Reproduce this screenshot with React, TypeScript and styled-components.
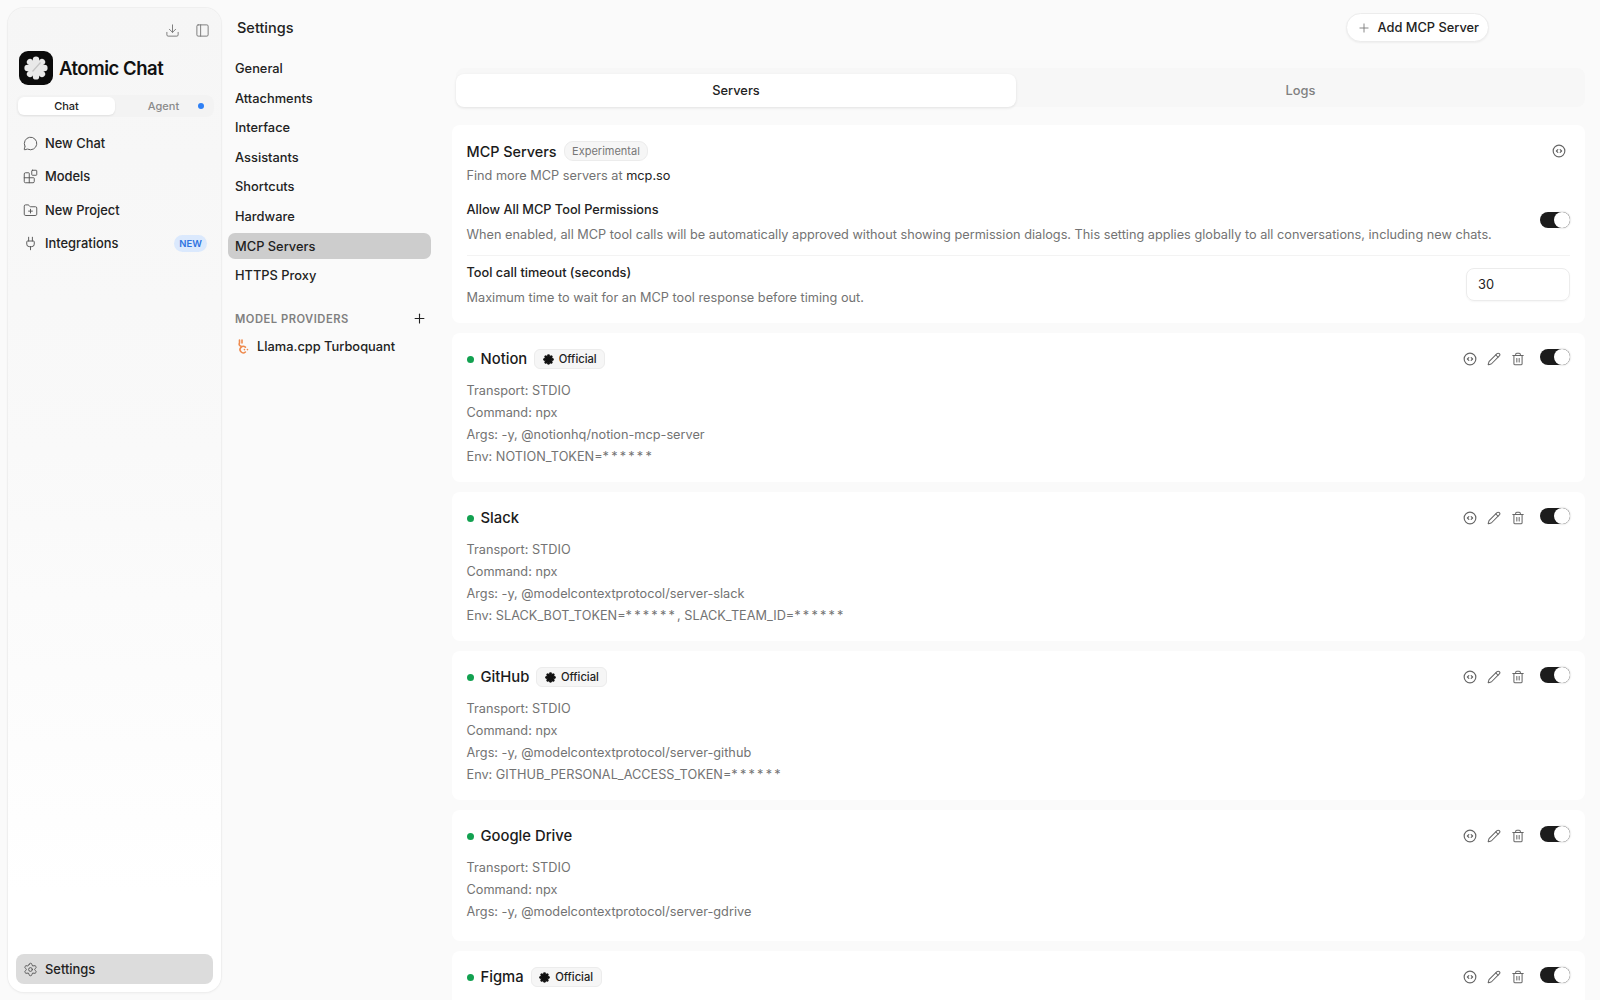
import React from "react";
import styled, { createGlobalStyle } from "styled-components";
import {
  Blocks,
  Download,
  FolderPlus,
  MessageCircle,
  PanelLeft,
  Pencil,
  Plug,
  Plus,
  Settings as SettingsIcon,
  Trash2,
} from "lucide-react";

const GlobalStyle = createGlobalStyle`
  html, body {
    margin: 0;
    height: 100%;
    overflow: hidden;
    background: #fafafa;
    color: #1b1b1b;
    font-family: Inter, "Liberation Sans", sans-serif;
    font-size: 12.85px;
  }
  * { box-sizing: border-box; }
`;

const Page = styled.div`
  display: flex;
  height: 100vh;
  padding: 8px 0 8px 8px;
  overflow: hidden;
`;

const Sidebar = styled.aside`
  width: 213px;
  flex: none;
  display: flex;
  flex-direction: column;
  padding: 0 8px 8px;
  border-radius: 16px;
  background: linear-gradient(#f6f6f6 0%, #f9f9f9 45%, #ffffff 90%);
  box-shadow: 0 0 0 1px #efefef, 0 1px 3px rgba(0, 0, 0, 0.06);
`;

const SideTools = styled.div`
  display: flex;
  justify-content: flex-end;
  align-items: center;
  gap: 15px;
  height: 42px;
  padding: 0 3px 0 0;
  margin-top: 1px;
  color: #777;
`;

const Brand = styled.div`
  display: flex;
  align-items: center;
  gap: 6px;
  height: 34px;
  margin-left: 3px;
`;

const LogoBox = styled.div`
  width: 34px;
  height: 34px;
  border-radius: 9px;
  background: #0b0b0b;
  display: flex;
  align-items: center;
  justify-content: center;
`;

const BrandName = styled.span`
  font-size: 18.5px;
  font-weight: 600;
  letter-spacing: -0.5px;
  color: #111;
`;

const ModeSwitch = styled.div`
  display: flex;
  align-items: center;
  height: 22px;
  margin: 10px -1px 0 0;
  padding: 2px;
  border-radius: 8px;
  background: #f3f3f3;
`;

const ModeTab = styled.div<{ $active?: boolean }>`
  position: relative;
  flex: 1;
  height: 18px;
  display: flex;
  align-items: center;
  justify-content: center;
  border-radius: 6px;
  font-size: 11px;
  font-weight: 500;
  color: ${(p) => (p.$active ? "#222" : "#8a8a8a")};
  background: ${(p) => (p.$active ? "#fff" : "transparent")};
  box-shadow: ${(p) => (p.$active ? "0 1px 2px rgba(0,0,0,.08)" : "none")};
`;

const BlueDot = styled.span`
  position: absolute;
  right: 8px;
  top: 6px;
  width: 6px;
  height: 6px;
  border-radius: 50%;
  background: #2f80f5;
`;

const SideNav = styled.nav`
  display: flex;
  flex-direction: column;
  margin-top: 10px;
  flex: 1;
`;

const SideItem = styled.div`
  display: flex;
  align-items: center;
  gap: 7px;
  height: 33.3px;
  padding-left: 7px;
  font-size: 12.9px;
  font-weight: 450;
  color: #222;
  svg {
    color: #555;
    flex: none;
  }
`;

const NewPill = styled.span`
  margin-left: auto;
  margin-right: 6px;
  width: 33px;
  height: 17px;
  border-radius: 9px;
  background: #dbe9fd;
  color: #2f74e0;
  font-size: 9.5px;
  font-weight: 600;
  display: flex;
  align-items: center;
  justify-content: center;
`;

const SettingsButton = styled(SideItem)`
  height: 30px;
  border-radius: 8px;
  background: #dcdcdc;
`;

const Main = styled.div`
  flex: 1;
  min-width: 0;
  display: flex;
  flex-direction: column;
`;

const Header = styled.header`
  display: flex;
  align-items: center;
  justify-content: space-between;
  flex: none;
  height: 39px;
  padding: 0 111px 0 16px;
`;

const HeaderTitle = styled.h1`
  margin: 0;
  font-size: 14.5px;
  font-weight: 500;
  color: #222;
`;

const AddButton = styled.button`
  display: flex;
  align-items: center;
  gap: 7px;
  height: 29px;
  padding: 0 9px 0 10px;
  border: 1px solid #ececec;
  border-radius: 15px;
  background: #fff;
  font: 500 12.8px Inter, "Liberation Sans", sans-serif;
  color: #222;
  box-shadow: 0 1px 2px rgba(0, 0, 0, 0.05);
  svg {
    color: #777;
  }
`;

const Body = styled.div`
  flex: 1;
  min-height: 0;
  display: flex;
`;

const SettingsNav = styled.nav`
  width: 231px;
  flex: none;
  padding: 8.5px 21px 0 7px;
  display: flex;
  flex-direction: column;
  gap: 3.6px;
`;

const NavLink = styled.div<{ $active?: boolean }>`
  height: 26px;
  display: flex;
  align-items: center;
  padding-left: 7px;
  border-radius: 7px;
  font-weight: 450;
  color: #222;
  background: ${(p) => (p.$active ? "#cdcdcd" : "transparent")};
`;

const ProvidersHead = styled.div`
  display: flex;
  align-items: center;
  justify-content: space-between;
  height: 20px;
  margin-top: 16.5px;
  padding: 0 4px 0 7px;
  font-size: 11.2px;
  font-weight: 600;
  letter-spacing: 0.5px;
  color: #808080;
  svg {
    color: #222;
  }
`;

const ProviderRow = styled.div`
  display: flex;
  align-items: center;
  gap: 8px;
  height: 26px;
  margin-top: 1px;
  padding-left: 9px;
  font-weight: 450;
  color: #222;
`;

const Content = styled.main`
  flex: 1;
  min-width: 0;
  padding: 21px 15px 0 0;
  display: flex;
  flex-direction: column;
  gap: 10px;
`;

const Tabs = styled.div`
  display: flex;
  height: 39px;
  flex: none;
  margin: 0 0 8px 4px;
  background: #f7f7f7;
  border-radius: 8px;
`;

const TabItem = styled.div<{ $active?: boolean }>`
  flex: ${(p) => (p.$active ? "0 0 560px" : "1")};
  display: flex;
  align-items: center;
  justify-content: center;
  height: 33px;
  margin-top: 6px;
  border-radius: 8px;
  font-weight: 500;
  color: ${(p) => (p.$active ? "#222" : "#808080")};
  background: ${(p) => (p.$active ? "#fff" : "transparent")};
  box-shadow: ${(p) => (p.$active ? "0 1px 3px rgba(0,0,0,.1)" : "none")};
`;

const Card = styled.section<{ $bottom: number }>`
  flex: none;
  background: #fff;
  border-radius: 8px;
  padding: 15px 15px ${(p) => p.$bottom}px 14.5px;
`;

const CardTop = styled.div`
  display: flex;
  align-items: center;
  height: 22px;
`;

const StatusDot = styled.span`
  width: 7px;
  height: 7px;
  margin: 0 7px 0 0;
  border-radius: 50%;
  background: #12a150;
`;

const CardTitle = styled.h2`
  margin: 0;
  font-size: 14.8px;
  font-weight: 500;
  color: #1b1b1b;
`;

const PanelTitle = styled(CardTitle)`
  font-size: 14.4px;
`;

const Badge = styled.span`
  display: inline-flex;
  align-items: center;
  gap: 5px;
  height: 20px;
  margin-left: 7px;
  padding: 0 7.5px;
  border: 1px solid #ececec;
  border-radius: 6px;
  background: #f6f6f6;
  font-size: 11.2px;
  font-weight: 500;
  color: #222;
`;

const PlainBadge = styled(Badge)`
  border-radius: 9px;
  font-size: 11px;
  color: #777;
  font-weight: 400;
`;

const CardActions = styled.div`
  margin-left: auto;
  display: flex;
  align-items: center;
  gap: 10px;
  color: #666;
`;

const TopIcon = styled.span`
  display: flex;
  margin-right: 4px;
`;

const Toggle = styled.span`
  position: relative;
  display: block;
  flex: none;
  width: 30px;
  height: 16px;
  margin-left: 5px;
  margin-top: -4px;
  border-radius: 8px;
  background: #1c1c1c;
  &::after {
    content: "";
    position: absolute;
    top: 0;
    right: 0;
    width: 16px;
    height: 16px;
    border-radius: 50%;
    background: #fff;
    box-shadow: 0 0 2px rgba(0, 0, 0, 0.3);
  }
`;

const RowToggle = styled(Toggle)`
  margin-top: -7px;
`;

const Muted = styled.div`
  color: #737373;
  line-height: 22px;
  font-size: 12.72px;
`;

const Mask = styled.span`
  letter-spacing: 2.2px;
`;

const Link = styled.span`
  color: #222;
`;

const FindMore = styled(Muted)`
  margin-top: 3px;
`;

const SettingRow = styled.div<{ $line?: boolean }>`
  display: flex;
  align-items: center;
  justify-content: space-between;
  margin-top: ${(p) => (p.$line ? "9px" : "13px")};
  padding-top: ${(p) => (p.$line ? "7px" : "0")};
  border-top: ${(p) => (p.$line ? "1px solid #f3f3f3" : "none")};
`;

const SettingName = styled.div`
  font-size: 12.75px;
  font-weight: 500;
  line-height: 20px;
  color: #222;
  margin-bottom: 4px;
`;

const TimeoutInput = styled.div`
  width: 104px;
  height: 33px;
  margin-top: -4px;
  display: flex;
  align-items: center;
  padding-left: 11px;
  border: 1px solid #ececec;
  border-radius: 8px;
  box-shadow: 0 1px 2px rgba(0, 0, 0, 0.04);
  color: #222;
`;

const ServerLines = styled.div`
  margin-top: 10px;
`;

const Flower = ({ size, color, vein }: { size: number; color: string; vein?: string }) => (
  <svg width={size} height={size} viewBox="0 0 24 24">
    <circle cx="12" cy="12" r="7.5" fill={color} />
    {[0, 45, 90, 135, 180, 225, 270, 315].map((a) => (
      <circle key={a} cx="12" cy="3.6" r="3.2" fill={color} transform={`rotate(${a} 12 12)`} />
    ))}
    {vein && <path d="M16.5 6.5 8.5 15.5" stroke={vein} strokeWidth="1.2" />}
  </svg>
);

const CodeCircle = () => (
  <svg width="14" height="14" viewBox="0 0 24 24" fill="none" stroke="currentColor" strokeWidth="2" strokeLinecap="round" strokeLinejoin="round">
    <circle cx="12" cy="12" r="10" />
    <path d="m10 9.5-2.5 2.5 2.5 2.5M14 9.5l2.5 2.5-2.5 2.5" />
  </svg>
);

const LlamaMark = () => (
  <svg width="12" height="15" viewBox="0 0 12 15" fill="none" stroke="#ee8a4e" strokeWidth="1.6" strokeLinecap="round">
    <path d="M2.5 1v3M5 1v3M2.5 4c-1 1.5 0 3 2 3.5" />
    <path d="M8.4 8.2A3.2 3.2 0 1 0 8.4 13" />
    <path d="M7.4 10.6h.1M10.4 10.6h.1" />
  </svg>
);

const sideItems = [
  { label: "New Chat", icon: <MessageCircle size={15} strokeWidth={1.5} /> },
  { label: "Models", icon: <Blocks size={15} strokeWidth={1.5} /> },
  { label: "New Project", icon: <FolderPlus size={15} strokeWidth={1.5} /> },
  { label: "Integrations", icon: <Plug size={15} strokeWidth={1.5} />, isNew: true },
];

const navItems = ["General", "Attachments", "Interface", "Assistants", "Shortcuts", "Hardware", "MCP Servers", "HTTPS Proxy"];

const servers = [
  { name: "Notion", official: true, lines: ["Transport: STDIO", "Command: npx", "Args: -y, @notionhq/notion-mcp-server", "Env: NOTION_TOKEN=|"] },
  { name: "Slack", lines: ["Transport: STDIO", "Command: npx", "Args: -y, @modelcontextprotocol/server-slack", "Env: SLACK_BOT_TOKEN=|, SLACK_TEAM_ID=|"] },
  { name: "GitHub", official: true, lines: ["Transport: STDIO", "Command: npx", "Args: -y, @modelcontextprotocol/server-github", "Env: GITHUB_PERSONAL_ACCESS_TOKEN=|"] },
  { name: "Google Drive", lines: ["Transport: STDIO", "Command: npx", "Args: -y, @modelcontextprotocol/server-gdrive"] },
  { name: "Figma", official: true, lines: ["Transport: STDIO", "Command: npx"] },
];

// the | in a line stands for a masked value
const renderLine = (line: string) =>
  line.split("|").map((part, idx, all) => (
    <React.Fragment key={idx}>
      {part}
      {idx < all.length - 1 && <Mask>******</Mask>}
    </React.Fragment>
  ));

const App = () => (
  <>
    <GlobalStyle />
    <Page>
      <Sidebar>
        <SideTools>
          <Download size={15} strokeWidth={1.5} />
          <PanelLeft size={15} strokeWidth={1.5} />
        </SideTools>
        <Brand>
          <LogoBox>
            <Flower size={24} color="#e9e9e9" vein="#c4c4c4" />
          </LogoBox>
          <BrandName>Atomic Chat</BrandName>
        </Brand>
        <ModeSwitch>
          <ModeTab $active>Chat</ModeTab>
          <ModeTab>
            Agent
            <BlueDot />
          </ModeTab>
        </ModeSwitch>
        <SideNav>
          {sideItems.map((item) => (
            <SideItem key={item.label}>
              {item.icon}
              {item.label}
              {item.isNew && <NewPill>NEW</NewPill>}
            </SideItem>
          ))}
        </SideNav>
        <SettingsButton>
          <SettingsIcon size={15} strokeWidth={1.5} />
          Settings
        </SettingsButton>
      </Sidebar>
      <Main>
        <Header>
          <HeaderTitle>Settings</HeaderTitle>
          <AddButton>
            <Plus size={14} strokeWidth={1.5} />
            Add MCP Server
          </AddButton>
        </Header>
        <Body>
          <SettingsNav>
            {navItems.map((item) => (
              <NavLink key={item} $active={item === "MCP Servers"}>
                {item}
              </NavLink>
            ))}
            <ProvidersHead>
              MODEL PROVIDERS
              <Plus size={15} strokeWidth={1.75} />
            </ProvidersHead>
            <ProviderRow>
              <LlamaMark />
              Llama.cpp Turboquant
            </ProviderRow>
          </SettingsNav>
          <Content>
            <Tabs>
              <TabItem $active>Servers</TabItem>
              <TabItem>Logs</TabItem>
            </Tabs>
            <Card $bottom={14}>
              <CardTop>
                <PanelTitle>MCP Servers</PanelTitle>
                <PlainBadge>Experimental</PlainBadge>
                <CardActions>
                  <TopIcon>
                    <CodeCircle />
                  </TopIcon>
                </CardActions>
              </CardTop>
              <FindMore>
                Find more MCP servers at <Link>mcp.so</Link>
              </FindMore>
              <SettingRow>
                <div>
                  <SettingName>Allow All MCP Tool Permissions</SettingName>
                  <Muted>
                    When enabled, all MCP tool calls will be automatically approved without showing permission dialogs. This setting applies globally to all conversations, including new chats.
                  </Muted>
                </div>
                <RowToggle />
              </SettingRow>
              <SettingRow $line>
                <div>
                  <SettingName>Tool call timeout (seconds)</SettingName>
                  <Muted>Maximum time to wait for an MCP tool response before timing out.</Muted>
                </div>
                <TimeoutInput>30</TimeoutInput>
              </SettingRow>
            </Card>
            {servers.map((server) => (
              <Card key={server.name} $bottom={server.lines.length === 3 ? 18 : 14}>
                <CardTop>
                  <StatusDot />
                  <CardTitle>{server.name}</CardTitle>
                  {server.official && (
                    <Badge>
                      <Flower size={11} color="#111" />
                      Official
                    </Badge>
                  )}
                  <CardActions>
                    <CodeCircle />
                    <Pencil size={14} strokeWidth={1.75} />
                    <Trash2 size={14} strokeWidth={1.75} />
                    <Toggle />
                  </CardActions>
                </CardTop>
                <ServerLines>
                  {server.lines.map((line) => (
                    <Muted key={line}>{renderLine(line)}</Muted>
                  ))}
                </ServerLines>
              </Card>
            ))}
          </Content>
        </Body>
      </Main>
    </Page>
  </>
);

export default App;
